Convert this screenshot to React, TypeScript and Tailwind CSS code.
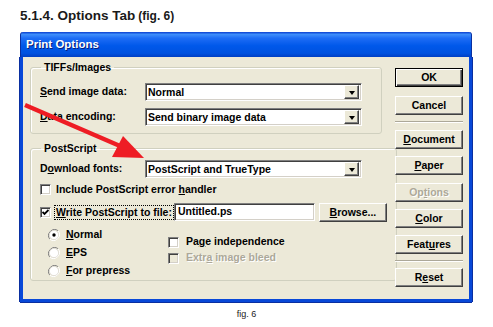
import React from "react";

const U = ({ children }: { children: React.ReactNode }) => (
  <span className="underline underline-offset-[1px] decoration-[1px]">{children}</span>
);

function DropBtn() {
  return (
    <div className="w-[15px] h-[14px] bg-[#ece9d8] border border-t-white border-l-white border-b-[#404040] border-r-[#404040] shadow-[inset_-1px_-1px_0_#808080] flex items-center justify-center">
      <div className="w-0 h-0 border-l-[3.5px] border-r-[3.5px] border-t-[4px] border-l-transparent border-r-transparent border-t-black mt-[1px]" />
    </div>
  );
}

function Select({ value }: { value: string }) {
  return (
    <div className="w-[217px] h-[18px] bg-white border border-t-[#808080] border-l-[#808080] border-b-white border-r-white shadow-[inset_1px_1px_0_#404040,inset_-1px_-1px_0_#d4d0c8] flex items-center justify-between pl-[2px] pr-[2px]">
      <span className="text-[10.5px] font-bold leading-none text-black">{value}</span>
      <DropBtn />
    </div>
  );
}

function Check({ checked, disabled }: { checked?: boolean; disabled?: boolean }) {
  return (
    <div
      className={
        "w-[11px] h-[11px] border border-t-[#808080] border-l-[#808080] border-b-white border-r-white shadow-[inset_1px_1px_0_#404040,inset_-1px_-1px_0_#d4d0c8] flex items-center justify-center shrink-0 " +
        (disabled ? "bg-[#ece9d8]" : "bg-white")
      }
    >
      {checked && (
        <svg width="7" height="7" viewBox="0 0 7 7">
          <path d="M0.5 3 L2.5 5 L6.5 1" stroke="black" strokeWidth="1.8" fill="none" />
        </svg>
      )}
    </div>
  );
}

function Radio({ checked }: { checked?: boolean }) {
  return (
    <svg width="12" height="12" viewBox="0 0 12 12" className="shrink-0">
      <path d="M10.2 1.8 A6 6 0 0 0 1.8 10.2" stroke="#808080" strokeWidth="1" fill="none" />
      <path d="M1.8 10.2 A6 6 0 0 0 10.2 1.8" stroke="#ffffff" strokeWidth="1" fill="none" />
      <circle cx="6" cy="6" r="4.6" fill="white" stroke="#d4d0c8" strokeWidth="0.6" />
      {checked && <circle cx="6" cy="6" r="1.7" fill="black" />}
    </svg>
  );
}

function Btn({
  children,
  def,
  disabled,
  className = "",
}: {
  children: React.ReactNode;
  def?: boolean;
  disabled?: boolean;
  className?: string;
}) {
  return (
    <div
      className={
        "w-[68px] h-[19px] bg-[#ece9d8] flex items-center justify-center text-[10.5px] font-bold leading-none whitespace-nowrap " +
        (def
          ? "border border-black shadow-[inset_1px_1px_0_#fff,inset_-1px_-1px_0_#404040,inset_-2px_-2px_0_#808080] "
          : "border border-t-white border-l-white border-b-[#404040] border-r-[#404040] shadow-[inset_-1px_-1px_0_#808080] ") +
        (disabled ? "text-[#aca899] [text-shadow:1px_1px_0_#fff] " : "text-black ") +
        className
      }
    >
      {children}
    </div>
  );
}

function Sep({ className = "" }: { className?: string }) {
  return <div className={"w-[68px] h-[2px] border-t border-t-[#aca899] border-b border-b-white " + className} />;
}

export default function App() {
  return (
    <div className="relative w-[493px] h-[327px] bg-white overflow-hidden font-['Liberation_Sans',Arial,sans-serif]">
      {/* Heading */}
      <div className="h-[32px] pl-[20px] pt-[9px] flex items-baseline gap-[3px] text-[#1a1a1a] font-bold">
        <span className="text-[13.5px] leading-none">5.1.4. Options Tab</span>
        <span className="text-[12px] leading-none">(fig. 6)</span>
      </div>

      {/* Dialog */}
      <div className="ml-[20px] w-[452px] h-[270px] flex flex-col">
        <div className="h-[25px] rounded-t-[3px] bg-[linear-gradient(to_bottom,#0a3fd0_0%,#3d8dfa_10%,#1e6cf5_25%,#0058ea_55%,#0052e0_85%,#003fc4_100%)] flex items-center pl-[5px] border-x border-[#0a2fa0]">
          <span className="text-white text-[11.5px] font-bold [text-shadow:1px_1px_0_#0a1e78]">Print Options</span>
        </div>
        <div className="flex-1 flex bg-[#ece9d8] border-x-[3px] border-b-[3px] border-[#0848d8] shadow-[1px_0_0_#0a2fa0,-1px_0_0_#0a2fa0,0_1px_0_#0a2fa0]">
          {/* Left column */}
          <div className="pl-[7px] pt-[4px] w-[362px] flex flex-col">
            <fieldset className="w-[352px] h-[73px] border border-[#d0d0bf] rounded-[3px] shadow-[inset_1px_1px_0_#fff] px-[9px]">
              <legend className="ml-[1px] px-[3px] text-[10.5px] font-bold leading-[13px]">TIFFs/Images</legend>
              <div className="flex items-center h-[18px] mt-[9px]">
                <span className="w-[105px] text-[10.5px] font-bold whitespace-nowrap">
                  <U>S</U>end image data:
                </span>
                <Select value="Normal" />
              </div>
              <div className="flex items-center h-[18px] mt-[7px]">
                <span className="w-[105px] text-[10.5px] font-bold whitespace-nowrap">
                  <U>D</U>ata encoding:
                </span>
                <Select value="Send binary image data" />
              </div>
            </fieldset>

            <fieldset className="w-[352px] h-[139px] mt-[8px] border border-[#d0d0bf] rounded-[3px] shadow-[inset_1px_1px_0_#fff] px-[9px]">
              <legend className="ml-[1px] px-[3px] text-[10.5px] font-bold leading-[13px]">PostScript</legend>
              <div className="flex items-center h-[18px] mt-[5px]">
                <span className="w-[105px] text-[10.5px] font-bold whitespace-nowrap">
                  D<U>o</U>wnload fonts:
                </span>
                <Select value="PostScript and TrueType" />
              </div>
              <div className="flex items-center h-[13px] mt-[5px] gap-[5px]">
                <Check />
                <span className="text-[10.5px] font-bold whitespace-nowrap">
                  Include PostScript error <U>h</U>andler
                </span>
              </div>
              <div className="flex items-center h-[18px] mt-[7px]">
                <Check checked />
                <span className="ml-[4px] text-[10.5px] font-bold outline outline-1 outline-dotted outline-black px-[1px] leading-[13px] whitespace-nowrap">
                  <U>W</U>rite PostScript to file:
                </span>
                <div className="ml-[1px] w-[141px] h-[18px] bg-white border border-t-[#808080] border-l-[#808080] border-b-white border-r-white shadow-[inset_1px_1px_0_#404040,inset_-1px_-1px_0_#d4d0c8] flex items-center pl-[3px]">
                  <span className="text-[10.5px] font-bold">Untitled.ps</span>
                </div>
                <Btn className="ml-[4px] w-[62px]">
                  <U>B</U>rowse...
                </Btn>
              </div>
              <div className="flex mt-[5px]">
                <div className="flex flex-col pl-[8px] w-[128px]">
                  <div className="flex items-center gap-[6px] h-[18px]">
                    <Radio checked />
                    <span className="text-[10.5px] font-bold">
                      <U>N</U>ormal
                    </span>
                  </div>
                  <div className="flex items-center gap-[6px] h-[18px]">
                    <Radio />
                    <span className="text-[10.5px] font-bold">
                      <U>E</U>PS
                    </span>
                  </div>
                  <div className="flex items-center gap-[6px] h-[18px]">
                    <Radio />
                    <span className="text-[10.5px] font-bold">
                      <U>F</U>or prepress
                    </span>
                  </div>
                </div>
                <div className="flex flex-col pt-[8px]">
                  <div className="flex items-center gap-[7px] h-[16px]">
                    <Check />
                    <span className="text-[10.5px] font-bold whitespace-nowrap">
                      Pa<U>g</U>e independence
                    </span>
                  </div>
                  <div className="flex items-center gap-[7px] h-[16px]">
                    <Check disabled />
                    <span className="text-[10.5px] font-bold text-[#aca899] [text-shadow:1px_1px_0_#fff] whitespace-nowrap">
                      Extr<U>a</U> image bleed
                    </span>
                  </div>
                </div>
              </div>
            </fieldset>
          </div>

          {/* Right column */}
          <div className="pl-[10px] pt-[11px] flex flex-col">
            <Btn def>OK</Btn>
            <Btn className="mt-[9px]">Cancel</Btn>
            <Sep className="mt-[6px]" />
            <Btn className="mt-[7px]">
              <U>D</U>ocument
            </Btn>
            <Btn className="mt-[7px]">
              <U>P</U>aper
            </Btn>
            <Btn disabled className="mt-[8px]">
              Op<U>t</U>ions
            </Btn>
            <Btn className="mt-[7px]">
              <U>C</U>olor
            </Btn>
            <Btn className="mt-[7px]">
              Feat<U>u</U>res
            </Btn>
            <Sep className="mt-[6px]" />
            <Btn className="mt-[6px]">
              R<U>e</U>set
            </Btn>
          </div>
        </div>
      </div>

      <div className="mt-[8px] text-center text-[9px] leading-none text-[#222]">fig. 6</div>

      {/* Red annotation arrow */}
      <svg className="absolute left-0 top-0 pointer-events-none" width="493" height="327" viewBox="0 0 493 327">
        <line x1="25" y1="105" x2="120" y2="146" stroke="#ee1c24" strokeWidth="4.5" />
        <polygon points="144,158 112,157 123,136" fill="#ee1c24" />
      </svg>
    </div>
  );
}
